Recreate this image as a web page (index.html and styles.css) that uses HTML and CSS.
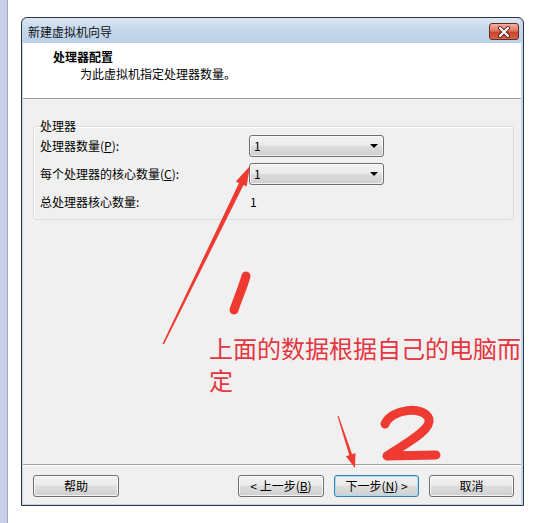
FILE: index.html
```html
<!DOCTYPE html>
<html lang="zh-CN">
<head>
<meta charset="utf-8">
<title>新建虚拟机向导</title>
<link rel="stylesheet" href="styles.css">
</head>
<body>
<div class="desktop">
  <div class="strip"></div>
  <div class="window">
    <div class="titlebar">
      <span class="title">新建虚拟机向导</span>
      <div class="close">
        <svg width="28" height="14" viewBox="0 0 28 14">
          <path d="M10,3 L18,11 M18,3 L10,11" stroke="#5a2018" stroke-width="4" stroke-linecap="round"/>
          <path d="M10,3 L18,11 M18,3 L10,11" stroke="#ffffff" stroke-width="2.2" stroke-linecap="round"/>
        </svg>
      </div>
    </div>
    <div class="client">
      <div class="header">
        <div class="h-title">处理器配置</div>
        <div class="h-sub">为此虚拟机指定处理器数量。</div>
      </div>
      <div class="main">
        <fieldset class="group">
          <legend>处理器</legend>
          <div class="grid">
            <span class="lbl">处理器数量(<u>P</u>):</span>
            <div class="combo"><span>1</span><i class="tri"></i></div>
            <span class="lbl">每个处理器的核心数量(<u>C</u>):</span>
            <div class="combo"><span>1</span><i class="tri"></i></div>
            <span class="lbl">总处理器核心数量:</span>
            <span class="val">1</span>
          </div>
        </fieldset>
      </div>
      <div class="footer">
        <button class="btn">帮助</button>
        <div class="spacer"></div>
        <button class="btn">&lt; 上一步(<u>B</u>)</button>
        <button class="btn default">下一步(<u>N</u>) &gt;</button>
        <button class="btn narrow">取消</button>
      </div>
    </div>
  </div>
  <svg class="annot" width="548" height="523" viewBox="0 0 548 523">
    <polygon fill="#ee3a30" points="162.5,343.8 239,182.9 235.8,181.4 250,166 246.6,186.6 243.5,185.1 164,344.2"/>
    <path d="M246,276 C243,287 238,298 234,310" fill="none" stroke="#ee3a30" stroke-width="9" stroke-linecap="round"/>
    <path d="M385,424 C391,409 424,405 429,419 C432,431 401,446 387,456 L436,455" fill="none" stroke="#ee3a30" stroke-width="9" stroke-linecap="round" stroke-linejoin="round"/>
    <polygon fill="#ee3a30" points="337.5,416.2 349.3,455.2 345.9,456.3 355,468 355.5,453.1 352.1,454.2 338.5,415.8"/>
  </svg>
  <div class="note">上面的数据根据自己的电脑而<br>定</div>
</div>
</body>
</html>
```
FILE: styles.css
```css
* { box-sizing: border-box; }
html, body {
  margin: 0;
  padding: 0;
  background: #ffffff;
}
body {
  font-family: "Noto Sans CJK SC", "Noto Sans", sans-serif;
  font-size: 12px;
  color: #000;
}
.desktop {
  position: relative;
  width: 548px;
  height: 523px;
  overflow: hidden;
  display: flex;
  align-items: flex-start;
}
.strip {
  width: 8px;
  height: 523px;
  background: #c8cfe7;
  border-right: 1px solid #9ea7c4;
  flex: none;
}
.window {
  margin-left: 13px;
  margin-top: 17px;
  width: 503px;
  height: 489px;
  border: 1px solid #2e3440;
  border-radius: 6px 6px 0 0;
  background: #c4d7ed;
  padding: 0 2px 1px 1px;
  display: flex;
  flex-direction: column;
  flex: none;
}
.titlebar {
  height: 25px;
  flex: none;
  display: flex;
  align-items: center;
  justify-content: space-between;
  padding: 0 2px 0 5px;
  background: linear-gradient(#dce7f4, #c6d8ed 45%, #b9cfe8);
  border-radius: 5px 5px 0 0;
}
.title {
  line-height: 16px;
  margin-top: 2px;
  color: #111;
}
.close {
  width: 30px;
  height: 17px;
  margin-top: 2px;
  border: 1px solid #6a2a20;
  border-radius: 3px;
  background: linear-gradient(#eeb0a2, #dd7a63 45%, #c9452b 55%, #d4644a);
  display: flex;
  align-items: center;
  justify-content: center;
}
.close svg { display: block; }
.client {
  flex: 1;
  display: flex;
  flex-direction: column;
  background: #f0f0f0;
}
.header {
  height: 56px;
  flex: none;
  background: #ffffff;
  border-bottom: 1px solid #a0a0a0;
  padding: 6px 0 0 30px;
}
.h-title {
  font-weight: bold;
  line-height: 16px;
}
.h-sub {
  line-height: 16px;
  margin-top: 1px;
  padding-left: 27px;
}
.main {
  flex: 1;
  padding: 19px 7px 0 10px;
  border-bottom: 1px solid #a0a0a0;
}
.group {
  margin: 0;
  padding: 1px 6px 6px 6px;
  border: 1px solid #d5dfe5;
  border-radius: 3px;
  box-shadow: inset 1px 1px 0 #fff;
}
.group legend {
  padding: 0;
  line-height: 16px;
}
.grid {
  display: grid;
  grid-template-columns: 209px 135px;
  grid-auto-rows: 22px;
  row-gap: 6px;
  align-items: center;
}
.lbl, .val {
  line-height: 16px;
}
.val { padding-left: 1px; }
.combo {
  height: 22px;
  border: 1px solid #707070;
  border-radius: 3px;
  background: linear-gradient(#f2f2f2, #ebebeb 45%, #dddddd 52%, #cfcfcf);
  box-shadow: inset 0 0 0 1px rgba(255,255,255,0.7);
  display: flex;
  align-items: center;
  justify-content: space-between;
  padding: 0 5px 0 4px;
}
.combo span { line-height: 16px; }
.tri {
  width: 0;
  height: 0;
  border-left: 4px solid transparent;
  border-right: 4px solid transparent;
  border-top: 4px solid #000;
}
.footer {
  height: 39px;
  flex: none;
  display: flex;
  align-items: flex-start;
  gap: 10px;
  padding: 9px 7px 0 10px;
  border-top: 1px solid #ffffff;
}
.spacer { flex: 1; }
.btn {
  width: 86px;
  height: 22px;
  font-family: inherit;
  font-size: 12px;
  line-height: 16px;
  color: #000;
  padding: 0;
  border: 1px solid #707070;
  border-radius: 3px;
  background: linear-gradient(#f2f2f2, #ebebeb 45%, #dddddd 52%, #cfcfcf);
  box-shadow: inset 0 0 0 1px rgba(255,255,255,0.75);
}
.btn.default {
  width: 85px;
  border-color: #3c7fb1;
  box-shadow: inset 0 0 0 1px #a6def6;
}
.btn.narrow { width: 85px; }
.annot {
  position: absolute;
  left: 0;
  top: 0;
  pointer-events: none;
}
.note {
  position: absolute;
  left: 209px;
  top: 332px;
  font-size: 24px;
  line-height: 32px;
  color: #e5363f;
  white-space: nowrap;
}
```
